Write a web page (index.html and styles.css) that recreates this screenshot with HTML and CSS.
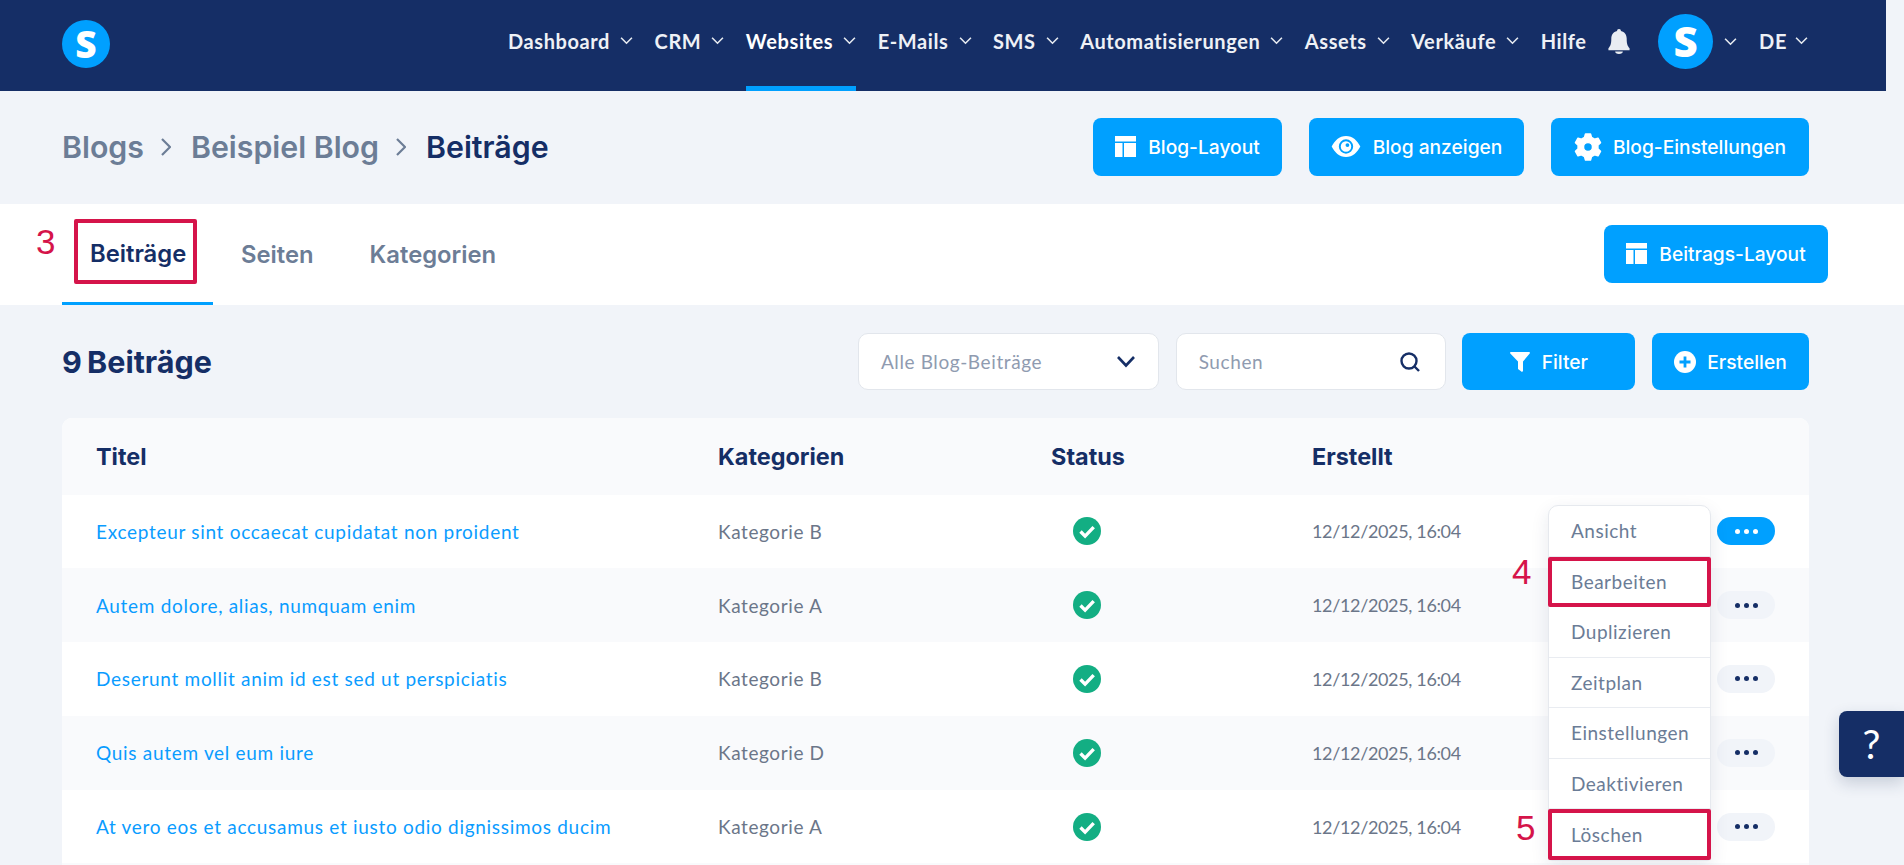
FILE: index.html
```html
<!DOCTYPE html>
<html lang="de">
<head>
<meta charset="utf-8">
<title>Beiträge</title>
<link rel="stylesheet" href="styles.css">
</head>
<body>
<svg class="defs" width="0" height="0" aria-hidden="true">
  <symbol id="chev" viewBox="0 0 12 8"><path d="M1 1.500l5 5 5-5" fill="none" stroke="currentColor" stroke-width="1.500"/></symbol>
  <symbol id="layout" viewBox="0 0 21 21"><path d="M0 0h21v5.500H0zM0 7h7.500v14H0zM9 7h12v14H9z" fill="currentColor"/></symbol>
  <symbol id="check" viewBox="0 0 28 28"><circle cx="14" cy="14" r="14" fill="#13ae83"/><path d="M7.500 14.500l4.600 4.600 8.600-9" fill="none" stroke="#fff" stroke-width="3.400"/></symbol>
</svg>
<header class="topbar">
  <div class="logo">S</div>
  <nav class="nav">
    <a class="nav-item">Dashboard<svg class="chev"><use href="#chev"/></svg></a>
    <a class="nav-item">CRM<svg class="chev"><use href="#chev"/></svg></a>
    <a class="nav-item active">Websites<svg class="chev"><use href="#chev"/></svg></a>
    <a class="nav-item">E-Mails<svg class="chev"><use href="#chev"/></svg></a>
    <a class="nav-item">SMS<svg class="chev"><use href="#chev"/></svg></a>
    <a class="nav-item">Automatisierungen<svg class="chev"><use href="#chev"/></svg></a>
    <a class="nav-item">Assets<svg class="chev"><use href="#chev"/></svg></a>
    <a class="nav-item">Verkäufe<svg class="chev"><use href="#chev"/></svg></a>
    <a class="nav-item">Hilfe</a>
    <svg class="bell" viewBox="0 0 22 26"><path d="M11 0c1.400 0 2 1 2 2 4 1 6 4 6 8 0 6 1 8 3 10v2H0v-2c2-2 3-4 3-10 0-4 2-7 6-8 0-1 .6-2 2-2zM7 23.500h8c0 1.500-1.500 2.500-4 2.500s-4-1-4-2.500z" fill="#e9edf2"/></svg>
    <div class="avatar">S</div>
    <svg class="chev avatar-chev"><use href="#chev"/></svg>
    <a class="nav-item lang">DE<svg class="chev"><use href="#chev"/></svg></a>
  </nav>
</header>

<section class="crumbs">
  <div class="crumb-path">
    <span>Blogs</span>
    <svg class="crumb-sep" viewBox="0 0 10 18"><path d="M1 1l8 8-8 8" fill="none" stroke="currentColor" stroke-width="2.200"/></svg>
    <span>Beispiel Blog</span>
    <svg class="crumb-sep" viewBox="0 0 10 18"><path d="M1 1l8 8-8 8" fill="none" stroke="currentColor" stroke-width="2.200"/></svg>
    <strong>Beiträge</strong>
  </div>
  <div class="btn-row">
    <a class="btn btn-layout"><svg class="ico"><use href="#layout"/></svg>Blog-Layout</a>
    <a class="btn btn-view"><svg class="ico-eye" viewBox="0 0 30 22"><path fill-rule="evenodd" d="M15 0c7 0 12 5 15 11-3 6-8 11-15 11S3 17 0 11C3 5 8 0 15 0zm0 3.500a7.500 7.500 0 100 15 7.500 7.500 0 000-15z" fill="#fff"/><path fill-rule="evenodd" d="M15 5.500a5.500 5.500 0 110 11 5.500 5.500 0 010-11zm1.500 2a2 2 0 100 4 2 2 0 000-4z" fill="#fff"/></svg>Blog anzeigen</a>
    <a class="btn btn-gear"><svg class="ico-gear" viewBox="0 0 28 28"><path fill-rule="evenodd" stroke="#fff" stroke-width="1.500" stroke-linejoin="round" d="M11.500 1h5l1 3.500 3 1.700 3.500-1 2.500 4.400-2.600 2.600v3.600l2.600 2.600-2.500 4.400-3.500-1-3 1.700-1 3.500h-5l-1-3.500-3-1.700-3.500 1-2.500-4.400 2.600-2.600v-3.600L1.500 9.600 4 5.200l3.500 1 3-1.700zm2.500 8.500a4.500 4.500 0 100 9 4.500 4.500 0 000-9z" fill="#fff"/></svg>Blog-Einstellungen</a>
  </div>
</section>

<section class="tabs">
  <div class="tab-list">
    <a class="tab tab-active">Beiträge</a>
    <a class="tab">Seiten</a>
    <a class="tab">Kategorien</a>
  </div>
  <a class="btn btn-post"><svg class="ico"><use href="#layout"/></svg>Beitrags-Layout</a>
  <span class="mark mark-3">3</span>
  <span class="redbox redbox-tab"></span>
</section>

<main class="content">
  <div class="toolbar">
    <h1 class="count">9 Beiträge</h1>
    <div class="tools">
      <div class="field field-select">Alle Blog-Beiträge<svg class="sel-chev" viewBox="0 0 20 13"><path d="M2 2l8 8.500L18 2" fill="none" stroke="#152e66" stroke-width="2.600"/></svg></div>
      <div class="field field-search">Suchen<svg class="search" viewBox="0 0 20 20"><circle cx="9" cy="9" r="7.500" fill="none" stroke="#152e66" stroke-width="2.400"/><path d="M14.500 14.500l4.500 4.500" stroke="#152e66" stroke-width="2.400"/></svg></div>
      <a class="btn btn-filter"><svg class="ico-filter" viewBox="0 0 20 20"><path d="M1 0h18c.8 0 1.200 1 .7 1.600L13 9.500V19l-1 1-4-3V9.500L.3 1.600C-.2 1 .2 0 1 0z" fill="#fff"/></svg>Filter</a>
      <a class="btn btn-create"><svg class="ico-plus" viewBox="0 0 22 22"><circle cx="11" cy="11" r="11" fill="#fff"/><path d="M11 5.500v11M5.500 11h11" stroke="#00a0ff" stroke-width="2.800"/></svg>Erstellen</a>
    </div>
  </div>

  <div class="table">
    <div class="row head">
      <div>Titel</div><div>Kategorien</div><div class="status-head">Status</div><div>Erstellt</div><div></div>
    </div>
    <div class="row">
      <a class="title">Excepteur sint occaecat cupidatat non proident</a><div class="cat">Kategorie B</div><div class="status"><svg class="check"><use href="#check"/></svg></div><div class="date">12/12/2025, 16:04</div><div class="act"><button class="dots dots-on"><i></i><i></i><i></i></button></div>
    </div>
    <div class="row">
      <a class="title">Autem dolore, alias, numquam enim</a><div class="cat">Kategorie A</div><div class="status"><svg class="check"><use href="#check"/></svg></div><div class="date">12/12/2025, 16:04</div><div class="act"><button class="dots"><i></i><i></i><i></i></button></div>
    </div>
    <div class="row">
      <a class="title">Deserunt mollit anim id est sed ut perspiciatis</a><div class="cat">Kategorie B</div><div class="status"><svg class="check"><use href="#check"/></svg></div><div class="date">12/12/2025, 16:04</div><div class="act"><button class="dots"><i></i><i></i><i></i></button></div>
    </div>
    <div class="row">
      <a class="title">Quis autem vel eum iure</a><div class="cat">Kategorie D</div><div class="status"><svg class="check"><use href="#check"/></svg></div><div class="date">12/12/2025, 16:04</div><div class="act"><button class="dots"><i></i><i></i><i></i></button></div>
    </div>
    <div class="row">
      <a class="title">At vero eos et accusamus et iusto odio dignissimos ducim</a><div class="cat">Kategorie A</div><div class="status"><svg class="check"><use href="#check"/></svg></div><div class="date">12/12/2025, 16:04</div><div class="act"><button class="dots"><i></i><i></i><i></i></button></div>
    </div>
    <div class="row tail"></div>
  </div>
</main>

<ul class="menu">
  <li>Ansicht</li>
  <li class="boxed">Bearbeiten</li>
  <li>Duplizieren</li>
  <li>Zeitplan</li>
  <li>Einstellungen</li>
  <li>Deaktivieren</li>
  <li class="boxed">Löschen</li>
</ul>
<span class="mark mark-4">4</span>
<span class="mark mark-5">5</span>
<a class="help">?</a>
</body>
</html>
```
FILE: styles.css
```css
* { box-sizing: border-box; }
html, body { margin: 0; height: 865px; overflow: hidden; }
body { position: relative; background: #f1f4f9; font-family: Lato, "Noto Sans", sans-serif; color: #152e66; }
a { text-decoration: none; }
.defs { position: absolute; }

.topbar { width: 1886px; height: 91px; background: #152e66; display: flex; align-items: center; justify-content: space-between; padding: 0 78px 0 62px; }
.logo { width: 48px; height: 48px; margin-top: -4px; border-radius: 50%; background: #00a0ff; color: #fff; font: 800 37px/48px "Open Sans", sans-serif; text-align: center; }
.nav { display: flex; align-items: center; height: 91px; }
.nav-item { position: relative; display: flex; align-items: center; gap: 10px; height: 91px; margin-right: 21.500px; padding-bottom: 10px; color: #eef1f6; font: 700 20px "Lato", sans-serif; letter-spacing: .6px; white-space: nowrap; }
.active { color: #fff; box-shadow: inset 0 -5px 0 #00a0ff; }
.chev { width: 13px; height: 9px; color: #e6eaf0; flex: none; }
.bell { width: 22px; height: 25px; margin: -8px 28px 0 0; }
.avatar { width: 55px; height: 55px; margin-top: -9px; border-radius: 50%; background: #00a0ff; color: #fff; font: 800 42px/54px "Open Sans", sans-serif; text-align: center; }
.avatar-chev { margin: -9px 22px 0 11px; }
.lang { margin-right: 0; gap: 8px; }

.crumbs { height: 113px; width: 1886px; display: flex; align-items: center; justify-content: space-between; padding: 0 77px 2px 62px; }
.crumb-path { display: flex; align-items: center; font: 600 30.300px Inter, sans-serif; color: #6c7d96; }
.crumb-path strong { font-weight: 600; color: #152e66; }
.crumb-sep { width: 10px; height: 18px; margin: 0 20px 0 17px; }
.btn-row { display: flex; gap: 27px; }
.btn { display: flex; align-items: center; justify-content: center; height: 58px; border-radius: 8px; background: #00a0ff; color: #fff; font: 500 19.200px Inter, sans-serif; white-space: nowrap; }
.ico { width: 21px; height: 21px; margin-right: 12px; }
.ico-eye { width: 30px; height: 21px; margin-right: 12px; }
.ico-gear { width: 28px; height: 28px; margin-right: 11px; }
.btn-layout { width: 189px; }
.btn-view { width: 215px; }
.btn-gear { width: 258px; }

.tabs { position: relative; height: 101px; background: #fff; display: flex; align-items: center; justify-content: space-between; padding: 0 76px 0 62px; }
.tab-list { display: flex; height: 101px; }
.tab { display: flex; align-items: center; height: 101px; padding: 0 28px; font: 600 23.800px Inter, sans-serif; color: #6c7d96; }
.tab-active { width: 151px; padding: 0 0 0 28px; color: #152e66; border-bottom: 3px solid #00a0ff; }
.btn-post { width: 224px; margin-top: -2px; }
.mark { position: absolute; color: #d5144a; font: 400 35px "Liberation Sans", sans-serif; }
.mark-3 { left: 36px; top: 18px; }
.mark-4 { left: 1512px; top: 552px; }
.mark-5 { left: 1516px; top: 808px; }
.redbox { position: absolute; border: 4px solid #d5144a; border-radius: 2px; }
.redbox-tab { left: 74px; top: 15px; width: 123px; height: 65px; }

.content { width: 1886px; padding: 0 77px 0 62px; }
.toolbar { height: 113px; padding-top: 28px; display: flex; justify-content: space-between; align-items: flex-start; }
.count { margin: 0; font: 700 30.500px/58px Inter, sans-serif; word-spacing: -2px; color: #152e66; }
.tools { display: flex; gap: 16.700px; }
.field { display: flex; align-items: center; justify-content: space-between; height: 57px; padding: 0 22px; background: #fff; border: 1px solid #e2e6ec; border-radius: 10px; color: #8f9bb0; font-size: 19px; letter-spacing: .6px; }
.field-select { width: 301px; }
.field-search { width: 270px; padding-right: 25px; }
.sel-chev { width: 20px; height: 13px; }
.search { width: 20px; height: 20px; }
.btn-filter { width: 173px; height: 57px; }
.btn-create { width: 157px; height: 57px; }
.ico-filter { width: 20px; height: 20px; margin-right: 12px; }
.ico-plus { width: 22px; height: 22px; margin-right: 11px; }

.table { width: 1747px; border-radius: 10px 10px 0 0; overflow: hidden; background: #fff; }
.row { display: grid; grid-template-columns: 656px 333px 261px 1fr 92px; align-items: center; height: 73.800px; font-size: 19px; }
.row > :first-child { margin-left: 34px; }
.row:nth-child(odd) { background: #f9fafc; }
.head { height: 76.500px; font: 700 23.400px Inter, sans-serif; color: #152e66; }
.tail { height: 2px; }
.title { color: #0a9cff; letter-spacing: .7px; white-space: nowrap; }
.cat { color: #6b7689; letter-spacing: .6px; }
.date { color: #6b7689; font-size: 18px; letter-spacing: -.35px; }
.status-head { width: 74px; text-align: center; }
.status { width: 72px; display: flex; justify-content: center; }
.check { width: 28px; height: 28px; }
.act { display: flex; }
.dots { display: flex; align-items: center; justify-content: center; gap: 4px; width: 58px; height: 28px; padding: 0; border: 0; border-radius: 14px; background: #f1f4f9; }
.dots i { width: 5px; height: 5px; border-radius: 50%; background: #152e66; }
.dots-on { background: #00a0ff; }
.dots-on i { background: #fff; }

.menu { position: absolute; left: 1548px; top: 505px; width: 163px; margin: 0; padding: 0; list-style: none; background: #fff; border: 1px solid #e6e9ee; border-radius: 10px 10px 4px 4px; box-shadow: 0 6px 18px rgba(30, 50, 90, .10); }
.menu li { display: flex; align-items: center; height: 50.500px; padding-left: 22px; border-bottom: 1px solid #e9ecf1; color: #6b7c96; font-size: 19px; letter-spacing: .5px; }
.menu li:last-child { border-bottom: 0; }
.menu .boxed { margin: 0 -1px; outline: 4px solid #d5144a; outline-offset: -4px; border-radius: 2px; border-bottom: 0; padding-left: 23px; }
.help { position: absolute; right: 0; top: 711px; width: 65px; height: 66px; display: flex; align-items: center; justify-content: center; background: #152e66; border-radius: 8px 0 0 8px; color: #fff; font: 400 40px Lato, sans-serif; box-shadow: 0 6px 16px rgba(30, 50, 90, .2); }
```
